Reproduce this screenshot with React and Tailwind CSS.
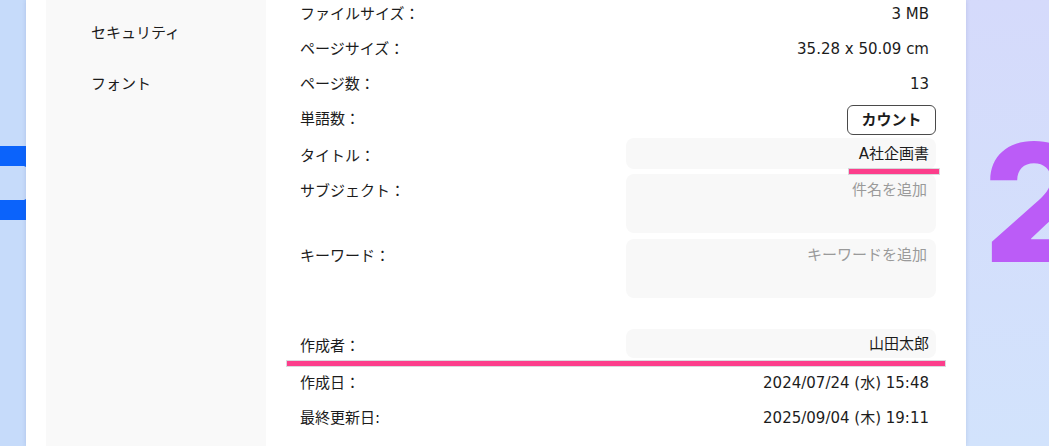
const rows = [
  { label: "ファイルサイズ：", value: "3 MB" },
  { label: "ページサイズ：", value: "35.28 x 50.09 cm" },
  { label: "ページ数：", value: "13" },
];

const dates = [
  { label: "作成日：", value: "2024/07/24 (水) 15:48" },
  { label: "最終更新日:", value: "2025/09/04 (木) 19:11" },
];

function Row({ label, children }) {
  return (
    <div className="h-[35px] flex items-center justify-between">
      <span>{label}</span>
      {children}
    </div>
  );
}

export default function App() {
  return (
    <div className="w-[1049px] h-[446px] overflow-hidden flex text-[15px] leading-[22px] text-[#1c1c1c] font-['DejaVu_Sans','Noto_Sans_CJK_JP',sans-serif]">
      {/* left background with clipped logo letter */}
      <div className="w-[26px] shrink-0 bg-[#c6dbfa] pt-[146px]">
        <svg width="26" height="75" viewBox="0 0 26 75">
          <path d="M0 0 H26 V21 L24 20 H0 Z" fill="#0b63fb" />
          <path d="M0 54 H24 L26 53 V74 H0 Z" fill="#0b63fb" />
        </svg>
      </div>

      {/* panel */}
      <div className="w-[940px] shrink-0 bg-white flex pl-[20px] shadow-[0_0_4px_rgba(60,80,140,0.18)] z-10">
        {/* sidebar */}
        <div className="w-[220px] bg-[#f9f9f9] pl-[45px] pt-[22px] flex flex-col gap-[29px]">
          <span>セキュリティ</span>
          <span>フォント</span>
        </div>

        {/* content */}
        <div className="flex-1 pl-[34px] pr-[30px]">
          <div className="-mt-1 flex flex-col">
            {rows.map((r) => (
              <Row key={r.label} label={r.label}>
                <span className="pr-[7px]">{r.value}</span>
              </Row>
            ))}
            <Row label="単語数：">
              <button className="w-[89px] h-[30px] rounded-md border border-[#4a4a4a] bg-white font-bold mt-[3px]">
                カウント
              </button>
            </Row>

            <div className="mt-[2px] flex justify-between">
              <span className="pt-[7px]">タイトル：</span>
              <div className="relative w-[310px] h-[31px] rounded-lg bg-[#f8f8f8] flex items-center justify-end pr-[7px]">
                A社企画書
                <div className="absolute -bottom-[5px] -right-[3px] w-[90px] h-[5px] bg-[#fc3e8b] shadow-[0_0_0_1px_rgba(150,150,160,0.35)]" />
              </div>
            </div>

            <div className="mt-[5px] flex justify-between">
              <span className="pt-[6px]">サブジェクト：</span>
              <div className="w-[310px] h-[59px] rounded-lg bg-[#f8f8f8] pt-[5px] pr-[9px] text-right text-[#9a9a9a]">
                件名を追加
              </div>
            </div>

            <div className="mt-[6px] flex justify-between">
              <span className="pt-[6px]">キーワード：</span>
              <div className="w-[310px] h-[59px] rounded-lg bg-[#f8f8f8] pt-[5px] pr-[9px] text-right text-[#9a9a9a]">
                キーワードを追加
              </div>
            </div>

            <div className="relative mt-[31px] flex justify-between">
              <span className="pt-[6px]">作成者：</span>
              <div className="w-[310px] h-[29px] rounded-lg bg-[#f8f8f8] flex items-center justify-end pr-[7px]">
                山田太郎
              </div>
              <div className="absolute top-[32px] -left-[13px] w-[658px] h-[5px] bg-[#fc3e8b] shadow-[0_0_0_1px_rgba(150,150,160,0.35)]" />
            </div>

            <div className="mt-[7px]">
              {dates.map((d) => (
                <Row key={d.label} label={d.label}>
                  <span className="pr-[7px]">{d.value}</span>
                </Row>
              ))}
            </div>
          </div>
        </div>
      </div>

      {/* right background with big number */}
      <div className="flex-1 bg-gradient-to-b from-[#d5dafb] to-[#d2e3fc] pl-[17px] pt-[108px] overflow-hidden">
        <span className="block font-['Inter',sans-serif] font-extrabold text-[164px] leading-[190px] text-[#bb5cf7]">
          2
        </span>
      </div>
    </div>
  );
}
